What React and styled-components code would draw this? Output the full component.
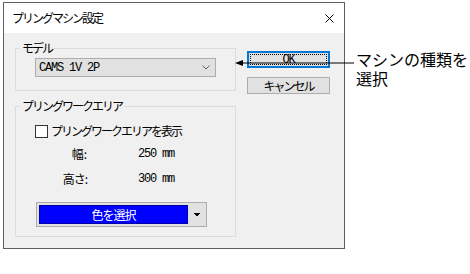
import React from "react";
import styled, { createGlobalStyle } from "styled-components";

const GlobalStyle = createGlobalStyle`
  html, body {
    margin: 0;
    padding: 0;
    background: #fff;
  }
  body {
    width: 470px;
    height: 274px;
    overflow: hidden;
    font-family: "Noto Sans CJK JP", "Noto Sans", sans-serif;
    color: #000;
  }
`;

const Stage = styled.div`
  position: relative;
  width: 470px;
  height: 274px;
  padding: 2px 0 0 3px;
  box-sizing: border-box;
`;

const Dialog = styled.div`
  width: 342px;
  height: 247px;
  box-sizing: border-box;
  border: 1px solid #5f5f5f;
  background: #f0f0f0;
  display: flex;
  flex-direction: column;
  font-size: 12px;
  line-height: 14px;
`;

const TitleBar = styled.div`
  height: 30px;
  flex: none;
  background: #fff;
  display: flex;
  align-items: center;
  justify-content: space-between;
  padding: 0 10px 0 8px;
`;

const Jp = styled.span`
  font-size: 12px;
  line-height: 14px;
  letter-spacing: ${(p) => p.$ls ?? -2}px;
  white-space: nowrap;
`;

const Body = styled.div`
  display: flex;
  gap: 11px;
  padding: 8px 0 0 11px;
`;

const LeftCol = styled.div`
  width: 221px;
  display: flex;
  flex-direction: column;
  gap: 8px;
`;

const GroupBox = styled.fieldset`
  margin: 0;
  padding: 0 0 0 19px;
  min-width: 0;
  border: 1px solid #dcdcdc;
  height: ${(p) => p.$h}px;
  box-sizing: border-box;
  display: flex;
  flex-direction: column;
  align-items: flex-start;
`;

const Legend = styled.legend`
  margin-left: -15px;
  padding: 0 2px;
  font-size: 12px;
  line-height: 14px;
  letter-spacing: -2px;
`;

const Select = styled.div`
  margin-top: 3px;
  width: 181px;
  height: 19px;
  box-sizing: border-box;
  border: 1px solid #adadad;
  background: #e1e1e1;
  display: flex;
  align-items: center;
  justify-content: space-between;
  padding: 0 5px 0 3px;
`;

const Mono = styled.span`
  font-family: "Liberation Mono", "DejaVu Sans Mono", monospace;
  font-size: 12px;
  letter-spacing: -1.2px;
  line-height: 14px;
`;

const CheckRow = styled.label`
  margin-top: 11px;
  height: 14px;
  display: flex;
  align-items: center;
  gap: 3px;
`;

const Box = styled.span`
  width: 13px;
  height: 13px;
  box-sizing: border-box;
  border: 1px solid #333;
  background: #fff;
`;

const SizeGrid = styled.div`
  margin-top: 9px;
  display: grid;
  grid-template-columns: 52px auto;
  grid-auto-rows: 14px;
  column-gap: 51px;
  row-gap: 11px;
  align-items: center;
`;

const SizeLabel = styled.div`
  text-align: right;
`;

const ColorButton = styled.div`
  margin: 16px 0 0 1px;
  width: 171px;
  height: 25px;
  box-sizing: border-box;
  border: 1px solid #adadad;
  background: #e1e1e1;
  padding: 2px 0 2px 2px;
  display: flex;
`;

const Swatch = styled.div`
  width: 149px;
  box-sizing: border-box;
  border: 1px solid #0000a8;
  background: ${(p) => p.$color};
  color: #fff;
  display: flex;
  align-items: center;
  justify-content: center;
`;

const DropPart = styled.div`
  flex: 1;
  display: flex;
  align-items: center;
  justify-content: center;
`;

const RightCol = styled.div`
  padding-top: 10px;
  display: flex;
  flex-direction: column;
  gap: 9px;
`;

const Button = styled.div`
  width: 83px;
  height: 17px;
  box-sizing: border-box;
  background: #e1e1e1;
  border: ${(p) => (p.$default ? "2px solid #0078d7" : "1px solid #adadad")};
  display: flex;
  align-items: center;
  justify-content: center;
  padding: 1px;
`;

const Focus = styled.div`
  width: 100%;
  height: 100%;
  box-sizing: border-box;
  border: 1px dotted #000;
  display: flex;
  align-items: center;
  justify-content: center;
`;

const Callout = styled.div`
  position: absolute;
  left: 234px;
  top: 51px;
  display: flex;
  align-items: flex-start;
`;

const CalloutText = styled.div`
  font-size: 16px;
  line-height: 19px;
  margin: -1px 0 0 2px;
  white-space: nowrap;
`;

const CalloutLine = styled.div`
  height: 19px;
  overflow: visible;
`;

const Chevron = () => (
  <svg width="8" height="5" viewBox="0 0 8 5">
    <polyline points="0.5,0.5 4,4 7.5,0.5" fill="none" stroke="#606060" strokeWidth="1" />
  </svg>
);

const Close = () => (
  <svg width="9" height="9" viewBox="0 0 9 9">
    <path d="M0.5 0.5 L8.5 8.5 M8.5 0.5 L0.5 8.5" stroke="#000" strokeWidth="1" />
  </svg>
);

const SmallArrow = () => (
  <svg width="6" height="3" viewBox="0 0 6 3">
    <path d="M0 0 H6 V1 H5 V2 H4 V3 H2 V2 H1 V1 H0 Z" fill="#000" />
  </svg>
);

const Leader = () => (
  <svg width="120" height="24" viewBox="0 0 120 24">
    <path d="M1 12 L9 9 L9 15 Z" fill="#000" />
    <line x1="4" y1="12" x2="120" y2="12" stroke="#000" strokeWidth="1" />
  </svg>
);

export default function App() {
  return (
    <>
      <GlobalStyle />
      <Stage>
        <Dialog>
          <TitleBar>
            <Jp>プリングマシン設定</Jp>
            <Close />
          </TitleBar>
          <Body>
            <LeftCol>
              <GroupBox $h={50}>
                <Legend>モデル</Legend>
                <Select>
                  <Mono>CAMS 1V 2P</Mono>
                  <Chevron />
                </Select>
              </GroupBox>
              <GroupBox $h={138}>
                <Legend>プリングワークエリア</Legend>
                <CheckRow>
                  <Box />
                  <Jp>プリングワークエリアを表示</Jp>
                </CheckRow>
                <SizeGrid>
                  <SizeLabel>
                    <Jp $ls={0}>幅:</Jp>
                  </SizeLabel>
                  <Mono>250 mm</Mono>
                  <SizeLabel>
                    <Jp $ls={-1}>高さ:</Jp>
                  </SizeLabel>
                  <Mono>300 mm</Mono>
                </SizeGrid>
                <ColorButton>
                  <Swatch $color="#0000ff">
                    <Jp $ls={-1}>色を選択</Jp>
                  </Swatch>
                  <DropPart>
                    <SmallArrow />
                  </DropPart>
                </ColorButton>
              </GroupBox>
            </LeftCol>
            <RightCol>
              <Button $default>
                <Focus>
                  <Mono>OK</Mono>
                </Focus>
              </Button>
              <Button>
                <Jp>キャンセル</Jp>
              </Button>
            </RightCol>
          </Body>
        </Dialog>
        <Callout>
          <Leader />
          <CalloutText>
            <CalloutLine>マシンの種類を</CalloutLine>
            <CalloutLine>選択</CalloutLine>
          </CalloutText>
        </Callout>
      </Stage>
    </>
  );
}
